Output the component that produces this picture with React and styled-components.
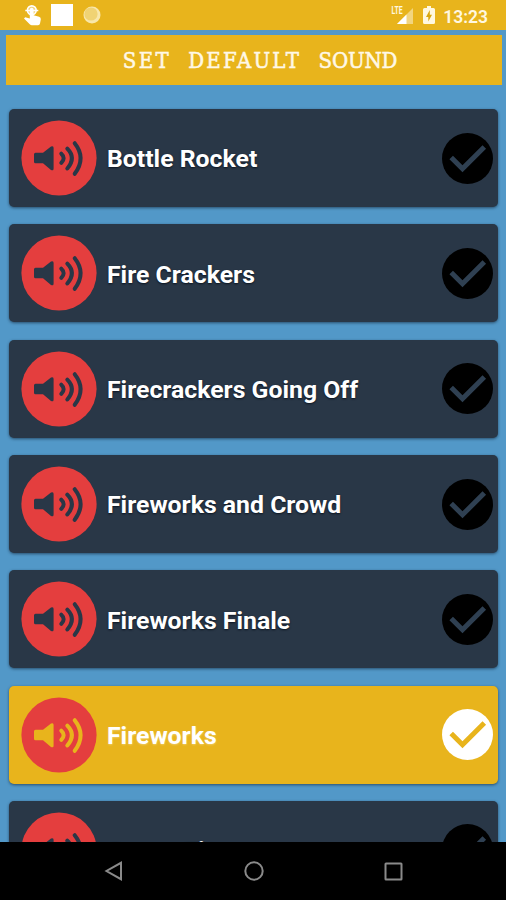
import React, { useState } from "react";
import styled, { createGlobalStyle } from "styled-components";

const GlobalStyle = createGlobalStyle`
  * {
    box-sizing: border-box;
  }
  body {
    margin: 0;
    background: #5298c8;
    font-family: Roboto, "Liberation Sans", sans-serif;
  }
`;

const Screen = styled.div`
  display: flex;
  flex-direction: column;
  width: 506px;
  height: 900px;
  overflow: hidden;
  background: #5298c8;
`;

const StatusBar = styled.div`
  flex: none;
  display: flex;
  justify-content: space-between;
  align-items: center;
  height: 30px;
  padding: 0 18px 0 22px;
  background: #e8b41c;
`;

const StatusGroup = styled.div`
  display: flex;
  align-items: center;
  height: 30px;
  svg {
    display: block;
  }
`;

const NoticeSquare = styled.div`
  width: 22px;
  height: 22px;
  margin: 0 10px 0 7px;
  background: #fff;
`;

const Clock = styled.span`
  margin-left: 8px;
  padding-top: 3px;
  color: #fff8e0;
  font-size: 17.5px;
  font-weight: 600;
  line-height: 20px;
`;

const Header = styled.h1`
  flex: none;
  height: 50px;
  margin: 5px 4px 0 6px;
  padding-left: 12px;
  background: #e8b41c;
  color: #fff8e6;
  font-family: "DejaVu Serif Condensed", "DejaVu Serif", serif;
  font-stretch: condensed;
  font-size: 22px;
  font-weight: 400;
  word-spacing: 11px;
  line-height: 51px;
  text-align: center;
  white-space: pre;
  -webkit-text-stroke: 0.5px #fff8e6;
`;

const Word = styled.span`
  letter-spacing: ${(props) => props.$tracking}px;
`;

const SoundList = styled.div`
  flex: 1;
  min-height: 0;
  display: flex;
  flex-direction: column;
  gap: 17.3px;
  padding: 24.2px 8px 0 9px;
  overflow: hidden;
`;

const SoundCard = styled.div`
  flex: none;
  display: flex;
  align-items: center;
  height: 98px;
  padding: 0 5px 0 12px;
  border-radius: 5px;
  background: ${(props) => (props.$selected ? "#e8b41c" : "#293747")};
  color: ${(props) => (props.$selected ? "#e8b41c" : "#293747")};
  box-shadow: 0 1px 3px rgba(20, 40, 60, 0.65);
  cursor: pointer;
  svg {
    flex: none;
    display: block;
  }
`;

const SoundName = styled.span`
  flex: 1;
  margin-left: 10px;
  padding-top: 2.6px;
  color: #fff;
  font-size: 24.8px;
  font-weight: 700;
  line-height: 30px;
  white-space: nowrap;
  text-shadow: 0 1px 2px
    ${(props) => (props.$selected ? "rgba(255,255,255,0.3)" : "#0b1420")};
`;

const NavBar = styled.div`
  flex: none;
  display: flex;
  justify-content: space-between;
  align-items: center;
  height: 58px;
  padding: 0 103px 0 104px;
  background: #000;
`;

function SpeakerIcon() {
  return (
    <svg width="76" height="76" viewBox="0 0 76 76" fill="none">
      <circle cx="38" cy="38" r="37.6" fill="#e43e3e" />
      <path
        d="M14.5 32.700h7.500L30 26.600q2.600-1.400 2.600 1.400v20.500q0 2.800-2.600 1.400L22 43.300h-7.500q-1.500 0-1.500-1.500v-7.600q0-1.500 1.500-1.500z"
        fill="currentColor"
      />
      <path
        d="M40.300 33.700Q45 38 40.300 42.800M46.300 28.700Q55.500 38 46.300 48.500M53.700 23.200Q65.500 38 53.700 53.800"
        stroke="currentColor"
        strokeWidth="4"
        strokeLinecap="round"
      />
    </svg>
  );
}

function CheckIcon({ selected }) {
  return (
    <svg width="51" height="51" viewBox="0 0 51 51" fill="none">
      <circle cx="25.500" cy="25.500" r="25.500" fill={selected ? "#fff" : "#000"} />
      <path
        d="M9.200 24.500L20.500 35.800L42.300 14"
        stroke={selected ? "#e8b41c" : "#2f4052"}
        strokeWidth="5"
      />
    </svg>
  );
}

function TouchIcon() {
  return (
    <svg width="22" height="22" viewBox="0 0 22 22">
      <circle cx="9.800" cy="6.300" r="4.400" fill="#f2d57e" stroke="#fff" strokeWidth="1.600" />
      <path d="M3.300 6.500h13" stroke="#fff" strokeWidth="1.500" />
      <path
        d="M7.800 5.500q0-1.800 1.900-1.800t1.900 1.800v5.800l5.500 1.400q2 .6 1.700 2.700l-.8 4q-.3 1.800-2 1.800H9.800q-1 0-1.800-.8L2 14.500l1.200-1.200 4.600 1.200z"
        fill="#fff"
      />
    </svg>
  );
}

function MoonIcon() {
  return (
    <svg width="18" height="18" viewBox="0 0 18 18">
      <circle cx="9" cy="9" r="8.500" fill="#f8e7ab" />
      <circle cx="8" cy="8" r="6.600" fill="#f0d374" />
    </svg>
  );
}

const SignalSvg = styled.svg`
  margin-right: 9px;
`;

const SignalText = styled.text`
  fill: #fff8e0;
  font-family: Roboto, sans-serif;
  font-size: 10px;
  font-weight: 700;
`;

function SignalIcon() {
  return (
    <SignalSvg width="23" height="22" viewBox="0 0 23 22">
      <path d="M22 4v16H6z" fill="#f2d57e" />
      <path d="M15.500 10.500V20H6z" fill="#fff" />
      <SignalText x="0.500" y="9.500" textLength="11" lengthAdjust="spacingAndGlyphs">
        LTE
      </SignalText>
    </SignalSvg>
  );
}

function BatteryIcon() {
  return (
    <svg width="12" height="18" viewBox="0 0 12 18">
      <path
        d="M4 0h4v2h2.500q1.500 0 1.500 1.500v13q0 1.500-1.500 1.500h-9Q0 18 0 16.500v-13Q0 2 1.500 2H4z"
        fill="#fff8e0"
      />
      <path d="M6.800 4L3 11h2.300v4.500L9 8.800H6.800z" fill="#d9a70f" />
    </svg>
  );
}

const NavSvg = styled.svg`
  fill: none;
  stroke: #8a8a8a;
  stroke-width: 2;
`;

const sounds = [
  "Bottle Rocket",
  "Fire Crackers",
  "Firecrackers Going Off",
  "Fireworks and Crowd",
  "Fireworks Finale",
  "Fireworks",
  "Canon Fire",
];

function App() {
  const [selected, setSelected] = useState("Fireworks");

  return (
    <Screen>
      <GlobalStyle />
      <StatusBar>
        <StatusGroup>
          <TouchIcon />
          <NoticeSquare />
          <MoonIcon />
        </StatusGroup>
        <StatusGroup>
          <SignalIcon />
          <BatteryIcon />
          <Clock>13:23</Clock>
        </StatusGroup>
      </StatusBar>
      <Header>
        <Word $tracking={2.3}>SET</Word> <Word $tracking={2.2}>DEFAULT</Word>{" "}
        <Word $tracking={-0.2}>SOUND</Word>
      </Header>
      <SoundList>
        {sounds.map((name) => (
          <SoundCard
            key={name}
            $selected={name === selected}
            onClick={() => setSelected(name)}
          >
            <SpeakerIcon />
            <SoundName $selected={name === selected}>{name}</SoundName>
            <CheckIcon selected={name === selected} />
          </SoundCard>
        ))}
      </SoundList>
      <NavBar>
        <NavSvg width="19" height="20" viewBox="0 0 19 20">
          <path d="M17 1.800v16.400L2.500 10z" />
        </NavSvg>
        <NavSvg width="20" height="20" viewBox="0 0 20 20">
          <circle cx="10" cy="10" r="8.700" />
        </NavSvg>
        <NavSvg width="19" height="19" viewBox="0 0 19 19">
          <rect x="1.500" y="1.500" width="16" height="16" rx="0.500" />
        </NavSvg>
      </NavBar>
    </Screen>
  );
}

export default App;
